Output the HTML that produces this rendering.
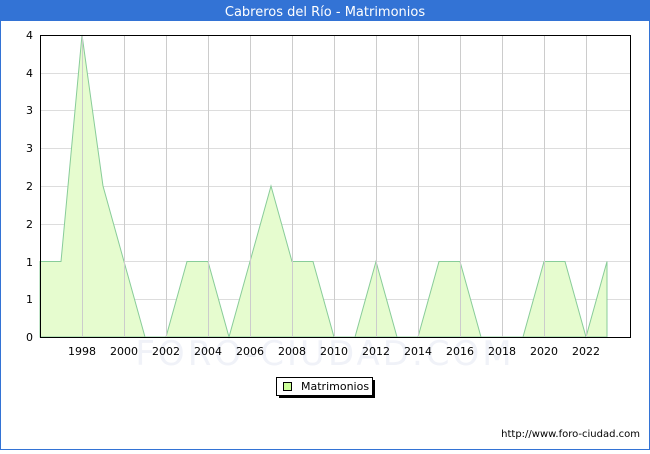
<!DOCTYPE html>
<html><head><style>
body{margin:0;width:650px;height:450px;overflow:hidden;background:#fff;font-family:"DejaVu Sans","Liberation Sans",sans-serif}
</style></head><body>
<svg width="650" height="450" xmlns="http://www.w3.org/2000/svg" font-family="DejaVu Sans, Liberation Sans, sans-serif">
<rect x="0.5" y="0.5" width="649" height="449" fill="#fff" stroke="#3373d5"/>
<rect x="0" y="0" width="650" height="21" fill="#3373d5"/>
<text x="325" y="16" font-size="13" fill="#fff" text-anchor="middle">Cabreros del Río - Matrimonios</text>
<text x="325" y="365" font-size="34" fill="#f0f2f8" text-anchor="middle" letter-spacing="3">FORO-CIUDAD.COM</text>
<g stroke="#ddd" stroke-width="1">
<line x1="40" y1="299.5" x2="630" y2="299.5"/><line x1="40" y1="261.5" x2="630" y2="261.5"/>
<line x1="40" y1="224.5" x2="630" y2="224.5"/><line x1="40" y1="186.5" x2="630" y2="186.5"/>
<line x1="40" y1="148.5" x2="630" y2="148.5"/><line x1="40" y1="110.5" x2="630" y2="110.5"/>
<line x1="40" y1="73.5" x2="630" y2="73.5"/>
</g>
<polygon fill="#e6fccf" stroke="#88cc99" stroke-width="1" points="40,337 40,261.5 61,261.5 82,35 103,186 124,261.5 145,337 166,337 187,261.5 208,261.5 229,337 250,261.5 271,186 292,261.5 313,261.5 334,337 355,337 376,261.5 397,337 418,337 439,261.5 460,261.5 481,337 502,337 523,337 544,261.5 565,261.5 586,337 607,261.5 607,337"/>
<g stroke="#ccc" stroke-width="1">
<line x1="82.5" y1="35" x2="82.5" y2="337"/><line x1="124.5" y1="35" x2="124.5" y2="337"/>
<line x1="166.5" y1="35" x2="166.5" y2="337"/><line x1="208.5" y1="35" x2="208.5" y2="337"/>
<line x1="250.5" y1="35" x2="250.5" y2="337"/><line x1="292.5" y1="35" x2="292.5" y2="337"/>
<line x1="334.5" y1="35" x2="334.5" y2="337"/><line x1="376.5" y1="35" x2="376.5" y2="337"/>
<line x1="418.5" y1="35" x2="418.5" y2="337"/><line x1="460.5" y1="35" x2="460.5" y2="337"/>
<line x1="502.5" y1="35" x2="502.5" y2="337"/><line x1="544.5" y1="35" x2="544.5" y2="337"/>
<line x1="586.5" y1="35" x2="586.5" y2="337"/>
</g>
<rect x="40.5" y="35.5" width="590" height="302" fill="none" stroke="#000"/>
<g font-size="11" fill="#000" text-anchor="end">
<text x="33" y="341">0</text><text x="33" y="303">1</text><text x="33" y="266">1</text>
<text x="33" y="228">2</text><text x="33" y="190">2</text><text x="33" y="152">3</text>
<text x="33" y="114">3</text><text x="33" y="77">4</text><text x="33" y="39">4</text>
</g>
<g font-size="11" fill="#000" text-anchor="middle">
<text x="82" y="355">1998</text><text x="124" y="355">2000</text><text x="166" y="355">2002</text>
<text x="208" y="355">2004</text><text x="250" y="355">2006</text><text x="292" y="355">2008</text>
<text x="334" y="355">2010</text><text x="376" y="355">2012</text><text x="418" y="355">2014</text>
<text x="460" y="355">2016</text><text x="502" y="355">2018</text><text x="544" y="355">2020</text>
<text x="586" y="355">2022</text>
</g>
<rect x="279" y="380" width="96" height="18" fill="#000"/>
<rect x="276.5" y="377.5" width="96" height="18" fill="#fff" stroke="#000"/>
<rect x="283.5" y="382.5" width="8" height="8" fill="#ccff99" stroke="#000"/>
<text x="301" y="390" font-size="11">Matrimonios</text>
<text x="640" y="437" font-size="10" text-anchor="end">http://www.foro-ciudad.com</text>
</svg>
</body></html>
